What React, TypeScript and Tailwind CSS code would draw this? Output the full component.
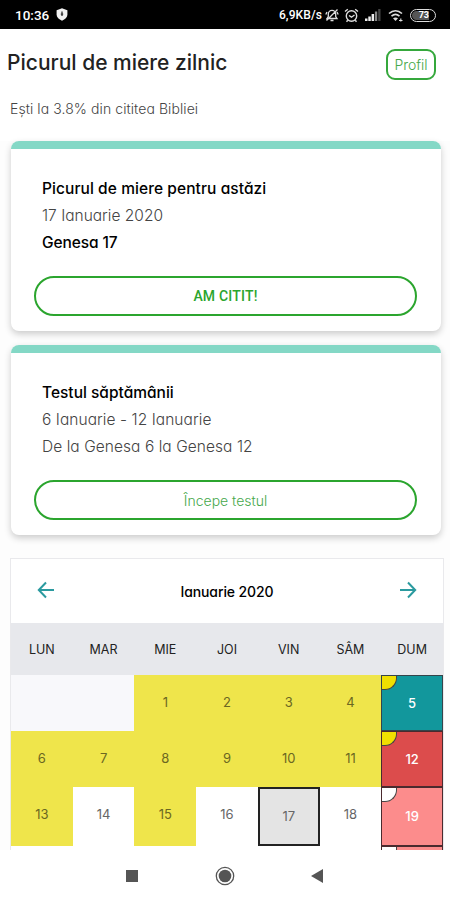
import clsx from 'clsx';

const weekDays = ['LUN', 'MAR', 'MIE', 'JOI', 'VIN', 'SÂM', 'DUM'];

type Day = {
  n?: number;
  type: 'empty' | 'read' | 'plain' | 'today' | 'passed' | 'failed' | 'pending';
};

const weeks: Day[][] = [
  [
    { type: 'empty' },
    { type: 'empty' },
    { n: 1, type: 'read' },
    { n: 2, type: 'read' },
    { n: 3, type: 'read' },
    { n: 4, type: 'read' },
    { n: 5, type: 'passed' }
  ],
  [
    { n: 6, type: 'read' },
    { n: 7, type: 'read' },
    { n: 8, type: 'read' },
    { n: 9, type: 'read' },
    { n: 10, type: 'read' },
    { n: 11, type: 'read' },
    { n: 12, type: 'failed' }
  ],
  [
    { n: 13, type: 'read' },
    { n: 14, type: 'plain' },
    { n: 15, type: 'read' },
    { n: 16, type: 'plain' },
    { n: 17, type: 'today' },
    { n: 18, type: 'plain' },
    { n: 19, type: 'pending' }
  ]
];

const dayStyles = {
  empty: 'bg-[#f8f8fb]',
  read: 'bg-[#efe54b] text-[#6b6722]',
  plain: 'bg-white text-[#666]',
  today: 'bg-[#e4e4e4] text-[#666] border-2 border-[#222]',
  passed: 'bg-[#12979c] text-white border border-[#35444a]',
  failed: 'bg-[#dc4c4c] text-white border border-[#4a2a2e]',
  pending: 'bg-[#fc8c8c] text-white border border-[#4a2a2e]'
};

function StatusBar() {
  return (
    <div className="flex h-[29px] shrink-0 items-center justify-between bg-black pl-[15px] pr-[14px] pt-px text-white">
      <div className="flex items-center gap-[7px]">
        <span className="font-[Roboto] text-[13.5px] font-medium">10:36</span>
        <svg className="-mt-px" width="12" height="13" viewBox="0 0 12 13">
          <path d="M6 .3 11.4 2.300V6.800c0 2.700-2.400 4.500-5.400 5.900C3 11.300.6 9.500.6 6.800V2.300Z" fill="#f2f2f2" />
          <path d="M6 3.500v4.500M4.800 6.200h2.400" stroke="#333" strokeWidth="1.3" />
        </svg>
      </div>
      <div className="flex items-center">
        <span className="font-[Roboto] text-[12px] font-medium tracking-[0.1px]">6,9KB/s</span>
        <svg className="ml-[3px]" width="14" height="14" viewBox="0 0 14 14" fill="none" stroke="#ddd" strokeWidth="1.3">
          <path d="M2 10.5h10L10.7 8.6V6A3.700 3.700 0 0 0 3.300 6v2.600ZM5.500 12.500h3M12.500 1.500l-11 11M.8 6.500 2 4M13.200 6.500 12 4" />
        </svg>
        <svg className="ml-[5px]" width="15" height="15" viewBox="0 0 15 15" fill="none" stroke="#ddd" strokeWidth="1.4">
          <circle cx="7.500" cy="8" r="5.200" />
          <path d="M1 3.500 3.800 1.200M14 3.500 11.200 1.200M5 7.500l2.500 1.700L10.500 7M3.800 12.200l-1.300 1.500M11.200 12.200l1.300 1.500" />
        </svg>
        <svg className="ml-[6px]" width="16" height="12" viewBox="0 0 16 12">
          <path d="M0 12V9.500h2.500V12ZM3.300 12V7.500h2.500V12ZM6.600 12V5h2.500v7Z" fill="#eee" />
          <path d="M9.900 12V2.500h2.300V12Z" fill="#888" />
          <path d="M13.200 12V0h2.300v12Z" fill="#444" />
        </svg>
        <svg className="ml-[7px]" width="16" height="13" viewBox="0 0 16 13" fill="none" stroke="#ddd" strokeWidth="1.600">
          <path d="M1 4.500c4-3.600 9-3.600 13 0M3.500 7.200c2.500-2.200 5.500-2.200 8 0" />
          <path d="M5 9.300c1.500-1.200 3.500-1.200 5 0l-2.500 2.700Z" fill="#ddd" stroke="none" />
          <path d="M11 11.500h3.500M12.800 9.500v3" strokeWidth="1.200" />
        </svg>
        <span className="ml-[6px] flex h-[13px] w-[26px] items-center rounded-full border-[1.5px] border-[#ddd] p-px">
          <span className="flex h-full w-[17px] items-center justify-end rounded-l-full bg-[#555] font-[Roboto] text-[9px] font-bold leading-none">
            73
          </span>
        </span>
      </div>
    </div>
  );
}

function Card({ children }: { children: React.ReactNode }) {
  return (
    <section className="h-[190px] overflow-hidden rounded-[8px] bg-white shadow-[0_3px_7px_rgba(0,0,0,0.2)]">
      <div className="h-2 bg-[#84d8c6]" />
      <div className="px-[23px] pt-[25px]">{children}</div>
    </section>
  );
}

function DayCell({ day }: { day: Day }) {
  const sunday = day.type === 'passed' || day.type === 'failed' || day.type === 'pending';
  return (
    <div className={clsx('relative flex items-center justify-center text-[13px]', dayStyles[day.type], sunday ? 'pt-px font-medium' : day.type !== 'today' && day.n && day.n > 12 && 'pb-[4px]')}>
      {sunday && (
        <span
          className={clsx(
            'absolute left-0 top-0 h-[14px] w-[15px] rounded-br-[12px] border-b border-r border-[#444]',
            day.type === 'pending' ? 'bg-white' : 'bg-[#f0e000]'
          )}
        />
      )}
      {day.n}
    </div>
  );
}

function Calendar() {
  return (
    <section className="mx-[10px] mt-[23px] h-[292px] w-[434px] overflow-hidden border border-b-0 border-[#e9e9ec] bg-white">
      <div className="flex h-[64px] items-center justify-between px-[26px]">
        <svg className="-mt-[3px]" width="18" height="18" viewBox="0 0 18 18" fill="none" stroke="#2b9a9f" strokeWidth="2">
          <path d="M9 1.500 1.800 9 9 16.500M2 9h15" />
        </svg>
        <span className="pt-px text-[14px] font-medium tracking-[-0.1px] text-black">Ianuarie 2020</span>
        <svg className="-mt-[3px]" width="18" height="18" viewBox="0 0 18 18" fill="none" stroke="#2b9a9f" strokeWidth="2">
          <path d="m9 1.500 7.200 7.500L9 16.500M16 9H1" />
        </svg>
      </div>
      <div className="grid h-[52px] grid-cols-7 items-center bg-[#e7e8ec] pt-[2px] text-center text-[12.500px] text-[#222]">
        {weekDays.map((name) => (
          <span key={name}>{name}</span>
        ))}
      </div>
      <div className="grid grid-cols-7 grid-rows-[56px_56px_59px_56px]">
        {weeks.flat().map((day, i) => (
          <DayCell key={i} day={day} />
        ))}
        <div className="col-span-6 bg-white" />
        <DayCell day={{ type: 'pending' }} />
      </div>
    </section>
  );
}

export default function App() {
  return (
    <div className="flex h-[900px] w-[450px] flex-col overflow-hidden bg-[#fdfdfd] font-[Inter,sans-serif] [font-feature-settings:'cv11']">
      <StatusBar />
      <header className="flex h-[66px] shrink-0 items-center justify-between bg-white pl-[7px] pr-[14px]">
        <h1 className="pt-px text-[21px] font-medium text-[#222]">Picurul de miere zilnic</h1>
        <button className="mt-[4px] h-[31px] w-[50px] rounded-[9px] border-2 border-[#35a83c] text-[14px] font-light text-[#46a84b]">
          Profil
        </button>
      </header>
      <p className="h-[46px] shrink-0 bg-white pl-[10px] pt-[4px] text-[14px] font-light leading-5 tracking-[0.08px] text-[#444]">
        Ești la 3.8% din cititea Bibliei
      </p>
      <div className="ml-[11px] flex w-[430px] shrink-0 flex-col gap-[14px]">
        <Card>
          <div className="px-2 pt-px text-[15.5px] leading-[27px]">
            <h2 className="font-medium tracking-[0.08px] text-black">Picurul de miere pentru astăzi</h2>
            <p className="font-light text-[#444]">17 Ianuarie 2020</p>
            <p className="font-medium tracking-[-0.1px] text-black">Genesa 17</p>
          </div>
          <button className="mt-[20px] h-[40px] w-[383px] rounded-full border-2 border-[#2ba52e] font-[Roboto] text-[14px] font-medium tracking-[0.2px] text-[#2ba52e]">
            AM CITIT!
          </button>
        </Card>
        <Card>
          <div className="px-2 pt-px text-[15.5px] leading-[27px]">
            <h2 className="font-medium text-black">Testul săptămânii</h2>
            <p className="font-light tracking-[0.06px] text-[#444]">6 Ianuarie - 12 Ianuarie</p>
            <p className="font-light tracking-[0.06px] text-[#444]">De la Genesa 6 la Genesa 12</p>
          </div>
          <button className="mt-[20px] h-[40px] w-[383px] rounded-full border-2 border-[#2ba52e] text-[14px] font-light text-[#46a84b]">
            Începe testul
          </button>
        </Card>
      </div>
      <Calendar />
      <nav className="flex h-[50px] shrink-0 items-center bg-white pl-[126px] pt-px">
        <svg width="12" height="12" viewBox="0 0 12 12">
          <path d="M0 0h12v12H0Z" fill="#555" />
        </svg>
        <svg className="ml-[77px]" width="20" height="20" viewBox="0 0 20 20">
          <circle cx="10" cy="10" r="8.700" fill="none" stroke="#555" strokeWidth="1.300" />
          <circle cx="10" cy="10" r="6.300" fill="#555" />
        </svg>
        <svg className="ml-[76px]" width="12" height="14" viewBox="0 0 12 14">
          <path d="M12 0v14L0 7Z" fill="#555" />
        </svg>
      </nav>
    </div>
  );
}
